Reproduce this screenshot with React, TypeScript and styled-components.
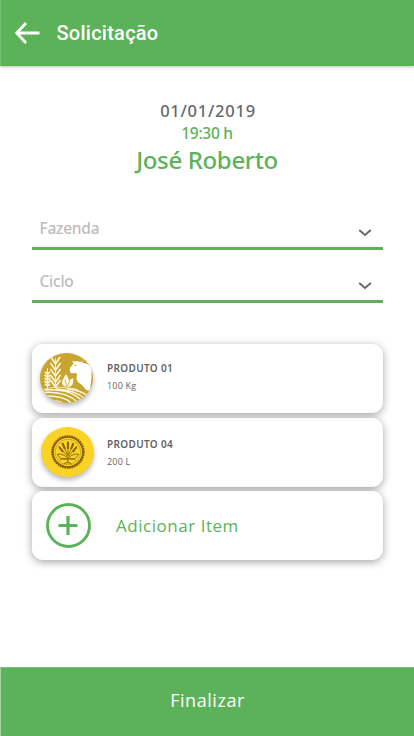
import React from "react";
import styled, { createGlobalStyle } from "styled-components";

const green = "#5cb258";

const GlobalStyle = createGlobalStyle`
  * { box-sizing: border-box; }
  body { margin: 0; background: #fff; }
`;

const Screen = styled.div`
  width: 414px;
  height: 736px;
  display: flex;
  flex-direction: column;
  overflow: hidden;
  background: #fff;
  font-family: "Open Sans", "Noto Sans", sans-serif;
`;

const Header = styled.header`
  height: 66px;
  flex: none;
  display: flex;
  align-items: center;
  padding-left: 14px;
  gap: 16.5px;
  background: ${green};
  border-left: 1px solid #78bf75;
  box-shadow: 0 1px 3px rgba(0, 0, 0, 0.25);
`;

const BackButton = styled.button`
  display: flex;
  padding: 0;
  border: 0;
  background: none;
`;

const Title = styled.h1`
  margin: 0;
  font: 500 20px/24px Roboto, sans-serif;
  letter-spacing: 0.25px;
  color: #fff;
`;

const Summary = styled.section`
  display: flex;
  flex-direction: column;
  align-items: center;
  padding-top: 34px;
  height: 144px;
  flex: none;
`;

const DateText = styled.div`
  padding-left: 2px;
  font: 500 16.5px/22px "Noto Sans", sans-serif;
  letter-spacing: 0.75px;
  color: #686868;
`;

const TimeText = styled.div`
  font: 500 15.5px/22px "Noto Sans", sans-serif;
  letter-spacing: -0.25px;
  color: ${green};
`;

const Name = styled.div`
  font: 500 24px/32px "Noto Sans", sans-serif;
  letter-spacing: -0.35px;
  color: ${green};
`;

const Fields = styled.div`
  width: 351px;
  margin-left: 31.5px;
  flex: none;
`;

const Field = styled.div`
  height: 40px;
  margin-bottom: 13px;
  border-bottom: 3px solid #62ae60;
  padding: 0 10.5px 0 8px;
  display: flex;
  justify-content: space-between;
  align-items: center;

  svg { margin-top: 7px; }
`;

const Placeholder = styled.span`
  padding-bottom: 2px;
  font: 500 15.5px/20px "Noto Sans", sans-serif;
  letter-spacing: -0.25px;
  color: #bdbdbd;
`;

const Cards = styled.div`
  margin: 28px 31px 0 32px;
  display: flex;
  flex-direction: column;
  gap: 4.5px;
`;

const Card = styled.div<{ $inset: number }>`
  height: 69px;
  display: flex;
  align-items: center;
  padding-left: ${(p) => p.$inset}px;
  border-radius: 11px;
  background: #fff;
  box-shadow: 0 2px 8px rgba(0, 0, 0, 0.36);
`;

const Badge = styled.div<{ $color: string; $lift: number }>`
  width: 53px;
  height: 50px;
  margin-bottom: ${(p) => p.$lift}px;
  border-radius: 50%;
  background: ${(p) => p.$color};
  box-shadow: 0 3px 5px rgba(0, 0, 0, 0.28);
  overflow: hidden;
  flex: none;
  svg { display: block; }
`;

const Product = styled.div<{ $gap: number; $top: number }>`
  align-self: flex-start;
  margin-left: ${(p) => p.$gap}px;
  padding-top: ${(p) => p.$top}px;
  color: #646464;
`;

const ProductName = styled.div`
  font: 600 10px/17px "Noto Sans", sans-serif;
  letter-spacing: 0.35px;
`;

const Amount = styled.div`
  font-size: 9px;
  line-height: 17px;
  letter-spacing: 0.2px;
`;

const AddLabel = styled.span`
  margin-left: 25px;
  font-size: 17px;
  letter-spacing: 0.53px;
  color: ${green};
`;

const Footer = styled.button`
  height: 69px;
  flex: none;
  margin-top: auto;
  padding: 0 0 4px;
  border: 0;
  border-left: 1px solid #a7d4a5;
  border-top: 1px solid #86b884;
  background: ${green};
  color: #fff;
  font: 400 18px/24px "Open Sans", sans-serif;
  letter-spacing: 0.55px;
`;

const Chevron = () => (
  <svg width="14" height="9" viewBox="0 0 14 9">
    <path d="M1.2 2 7 7 12.8 2" fill="none" stroke="#686868" strokeWidth="2" />
  </svg>
);

const FarmArt = () => (
  <svg width="53" height="50" viewBox="0 0 53 50">
    <g fill="none" stroke="#fff7dc">
      <g strokeWidth="1.6">
        <path d="M15.500 5v29" strokeWidth=".8" />
        <path d="m11 4 4.500 7 4.500-7M10.500 10l5 7 5-7M10.500 16l5 7 5-7M10.500 22l5 7 5-7M10.500 27l5 7 5-7" />
      </g>
      <path d="M7.500 15v20" strokeWidth="1" />
      <path d="m5 19 2.500 2 2.500-2M4.500 22l3 2 3-2M4.500 25l3 2 3-2M4.500 28l3 2 3-2M5 31l2.500 2 2.500-2" strokeWidth="1.700" />
      <path d="M3 36.500Q18 32 38 36.500" strokeWidth=".8" />
      <path d="M2 39.500q24-2 36 10M5 37q25-2 37 11M16 36q20 1 29 10M27 35.500q14 2 20 7M3 43q22-1 29 8M6 47q12 0 18 4" strokeWidth="1.500" />
    </g>
    <path d="M30 15c1-2 3-3 3.500-5L32 8l3 .5 2-.5 3 1 3-1-1 2c4 0 7 1 9.500 5v9l-1.500 14c-3 0-6-3-8-6-3-2-6-4-5.500-8 .5-2 1-3-.5-4-2 0-4 1-5.500-.5-.7-1-1-3-.5-4.500Z" fill="#fff" />
    <path d="M34.500 12.500h1.800" stroke="#c8a431" strokeWidth="1.200" />
    <path d="M27 34c-5-1-6-4-4-8l3-5c3 4 4 8 2 13ZM28 34c-1-5 1-7 5-9 1 5 0 8-5 9Z" fill="#fff7dc" />
    <path d="m25 27 2 7 3-6" fill="none" stroke="#c8a431" strokeWidth=".7" />
  </svg>
);

const SeedArt = () => (
  <svg width="53" height="50" viewBox="-.6 0 53 50" fill="none" stroke="#86600c">
    <circle cx="26.300" cy="25" r="15.100" strokeWidth="1.800" />
    <circle cx="26.300" cy="25" r="16.300" strokeWidth="1.200" strokeDasharray="1.500 1" />
    <circle cx="26.300" cy="25" r="12.800" strokeWidth=".4" />
    <path d="M26.300 14v23M25.500 29 17 19M27 29l8.500-10M26 28l-5.500-12M26.700 28l5.500-12" strokeWidth=".8" />
    <path d="M26.300 15v7M17.500 20l4 5M35 20l-4 5M20.800 16l2.500 6M31.900 16l-2.500 6" strokeWidth="2" />
    <path d="M26 31c-4-4-8-4-10-4 1 4 6 7 10 4Zm.7 0c4-4 8-4 10-4-1 4-6 7-10 4ZM18 33c3-2 6-2 8 0 2-2 5-2 8 0M22 37l4-2 4 2" strokeWidth=".9" />
  </svg>
);

export default function App() {
  return (
    <Screen>
      <GlobalStyle />
      <Header>
        <BackButton aria-label="Voltar">
          <svg width="25" height="22" viewBox="0 0 25 22">
            <path d="M11 1 1.700 11 11 21M2 11h22.500" fill="none" stroke="#fff" strokeWidth="2.800" />
          </svg>
        </BackButton>
        <Title>Solicitação</Title>
      </Header>
      <Summary>
        <DateText>01/01/2019</DateText>
        <TimeText>19:30 h</TimeText>
        <Name>José Roberto</Name>
      </Summary>
      <Fields>
        <Field><Placeholder>Fazenda</Placeholder><Chevron /></Field>
        <Field><Placeholder>Ciclo</Placeholder><Chevron /></Field>
      </Fields>
      <Cards>
        <Card $inset={8}>
          <Badge $color="#c8a431" $lift={2}><FarmArt /></Badge>
          <Product $gap={14} $top={16}>
            <ProductName>PRODUTO 01</ProductName>
            <Amount>100 Kg</Amount>
          </Product>
        </Card>
        <Card $inset={9}>
          <Badge $color="#fbd226" $lift={0}><SeedArt /></Badge>
          <Product $gap={13} $top={18}>
            <ProductName>PRODUTO 04</ProductName>
            <Amount>200 L</Amount>
          </Product>
        </Card>
        <Card $inset={14}>
          <svg width="45" height="45" viewBox="0 0 45 45" fill="none" stroke={green}>
            <circle cx="22.500" cy="22.500" r="21" strokeWidth="2.900" />
            <path d="M12.500 22.500h19M22 13v19" strokeWidth="3.200" />
          </svg>
          <AddLabel>Adicionar Item</AddLabel>
        </Card>
      </Cards>
      <Footer>Finalizar</Footer>
    </Screen>
  );
}
